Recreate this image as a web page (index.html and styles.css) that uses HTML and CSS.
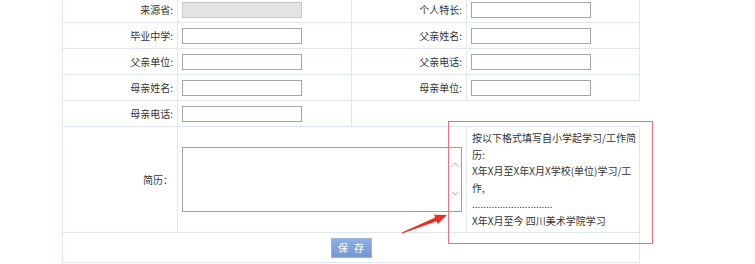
FILE: index.html
```html
<!DOCTYPE html>
<html lang="zh-CN">
<head>
  <meta charset="UTF-8">
  <meta name="viewport" content="width=device-width, initial-scale=1.0">
  <title>学生信息</title>
  <link rel="stylesheet" href="styles.css">
</head>
<body>
  <div class="page">
    <table class="form">
      <colgroup>
        <col class="c-label"><col class="c-field"><col class="c-label"><col class="c-field2">
      </colgroup>
      <tr>
        <td class="label">来源省:</td>
        <td class="field"><input type="text" class="txt" disabled></td>
        <td class="label">个人特长:</td>
        <td class="field"><input type="text" class="txt"></td>
      </tr>
      <tr>
        <td class="label">毕业中学:</td>
        <td class="field"><input type="text" class="txt"></td>
        <td class="label">父亲姓名:</td>
        <td class="field"><input type="text" class="txt"></td>
      </tr>
      <tr>
        <td class="label">父亲单位:</td>
        <td class="field"><input type="text" class="txt"></td>
        <td class="label">父亲电话:</td>
        <td class="field"><input type="text" class="txt"></td>
      </tr>
      <tr>
        <td class="label">母亲姓名:</td>
        <td class="field"><input type="text" class="txt"></td>
        <td class="label">母亲单位:</td>
        <td class="field"><input type="text" class="txt"></td>
      </tr>
      <tr>
        <td class="label">母亲电话:</td>
        <td class="field"><input type="text" class="txt"></td>
      </tr>
      <tr class="resume">
        <td class="label">简历：</td>
        <td class="field" colspan="2">
          <span class="area-wrap">
            <textarea class="area"></textarea>
            <svg class="chev chev-up" width="8" height="5" viewBox="0 0 8 5"><path d="M0.5 4.5 L4 1 L7.5 4.5" fill="none" stroke="#bbb" stroke-width="1"/></svg>
            <svg class="chev chev-down" width="8" height="5" viewBox="0 0 8 5"><path d="M0.5 0.5 L4 4 L7.5 0.5" fill="none" stroke="#bbb" stroke-width="1"/></svg>
          </span>
        </td>
        <td class="hint">
          按以下格式填写自小学起学习/工作简历:<br>
          X年X月至X年X月X学校(单位)学习/工作,<br>
          .............................<br>
          X年X月至今 四川美术学院学习
        </td>
      </tr>
      <tr class="actions">
        <td colspan="4"><button class="btn-save">保 存</button></td>
      </tr>
    </table>

    <div class="callout"></div>
    <svg class="arrow" width="50" height="28" viewBox="0 0 50 28">
      <polygon points="1.8,22.5 35.2,7.6 34,4.8 47,5 37.8,14.1 36.6,11.3 2.2,23.5" fill="#e8302a"/>
    </svg>
  </div>
</body>
</html>
```

FILE: styles.css
```css
body {
  margin: 0;
  background: #fff;
  font-family: "Noto Sans CJK SC", sans-serif;
  font-size: 10px;
  color: #333;
}
.page {
  position: relative;
  margin: -4px 0 0 62px;
  width: 580px;
}
.form {
  width: 577px;
  border-collapse: collapse;
  table-layout: fixed;
}
.c-label { width: 115px; }
.c-field { width: 174px; }
.c-field2 { width: 173px; }
.form td {
  border: 1px solid #dfe8f2;
  height: 25px;
  padding: 0;
}
.form .label {
  text-align: right;
  padding-right: 4px;
}
.form .field {
  padding-left: 4px;
}
.txt {
  display: block;
  width: 120px;
  height: 16px;
  box-sizing: border-box;
  border: 1px solid #a5a5a5;
  padding: 0 2px;
  font-size: 10px;
  background: #fff;
}
.txt:disabled {
  background: #e3e3e3;
  border-color: #c8c8c8;
}
.resume td {
  height: 105px;
}
.area-wrap {
  position: relative;
  display: block;
  width: 280px;
  height: 65px;
}
.area {
  display: block;
  width: 280px;
  height: 65px;
  box-sizing: border-box;
  border: 1px solid #a0a0a0;
  resize: none;
  margin: 0;
}
.chev {
  position: absolute;
  left: 269px;
}
.chev-up { top: 15px; }
.chev-down { top: 44px; }
.form .hint {
  padding: 0 2px 0 5px;
  line-height: 16.5px;
  vertical-align: middle;
}
.actions td {
  height: 29px;
  text-align: center;
}
.btn-save {
  width: 41px;
  height: 20px;
  border: 1px solid #9db5de;
  background: linear-gradient(#8eaee2, #7398d3);
  color: #fff;
  font-family: "Noto Sans CJK SC", sans-serif;
  font-size: 10px;
  letter-spacing: 2px;
  padding: 0 0 0 2px;
  vertical-align: middle;
  cursor: pointer;
}
.callout {
  position: absolute;
  left: 386px;
  top: 125px;
  width: 205px;
  height: 123px;
  box-sizing: border-box;
  border: 1px solid #e8707a;
}
.arrow {
  position: absolute;
  left: 338px;
  top: 214px;
}
```
